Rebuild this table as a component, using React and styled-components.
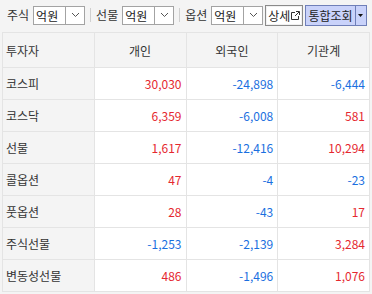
import styled, { createGlobalStyle } from 'styled-components';

const GlobalStyle = createGlobalStyle`
  html, body {
    margin: 0;
    padding: 0;
    background: #f4f4f4;
  }
  body {
    font-family: "Noto Sans CJK KR", "DejaVu Sans", sans-serif;
  }
`;

const rows = [
  { name: '코스피', values: [30030, -24898, -6444] },
  { name: '코스닥', values: [6359, -6008, 581] },
  { name: '선물', values: [1617, -12416, 10294] },
  { name: '콜옵션', values: [47, -4, -23] },
  { name: '풋옵션', values: [28, -43, 17] },
  { name: '주식선물', values: [-1253, -2139, 3284] },
  { name: '변동성선물', values: [486, -1496, 1076] },
];

const Chevron = () => (
  <svg width="9" height="6" viewBox="0 0 9 6">
    <path d="M1 1 L4.5 4.5 L8 1" fill="none" stroke="#555" strokeWidth="1" />
  </svg>
);

const UnitSelect = () => (
  <Select>
    <SelectValue>억원</SelectValue>
    <SelectArrow><Chevron /></SelectArrow>
  </Select>
);

const App = () => {
  return (
    <>
      <GlobalStyle />
      <Page>
        <Toolbar>
          <Label>주식</Label>
          <UnitSelect />
          <Divider />
          <Label>선물</Label>
          <UnitSelect />
          <Divider />
          <Label>옵션</Label>
          <UnitSelect />
          <DetailButton>
            상세
            <svg width="9" height="9" viewBox="0 0 9 9">
              <path d="M0.5 1.5 H4 M0.5 1.5 V8.5 H7.5 V5" fill="none" stroke="#333" strokeWidth="1" />
              <path d="M4 5 L8 1 M5 0.5 H8.5 V4" fill="none" stroke="#333" strokeWidth="1" />
            </svg>
          </DetailButton>
          <ComboButton>
            <ComboText>통합조회</ComboText>
            <ComboArrow>
              <svg width="5" height="3" viewBox="0 0 5 3">
                <path d="M0 0 H5 L2.5 3 Z" fill="#111" />
              </svg>
            </ComboArrow>
          </ComboButton>
        </Toolbar>

        <Table>
          <thead>
            <tr>
              <HeadCell $left>투자자</HeadCell>
              <HeadCell>개인</HeadCell>
              <HeadCell>외국인</HeadCell>
              <HeadCell>기관계</HeadCell>
            </tr>
          </thead>
          <tbody>
            {rows.map((row) => (
              <tr key={row.name}>
                <NameCell>{row.name}</NameCell>
                {row.values.map((v, i) => (
                  <ValueCell key={i} $negative={v < 0}>
                    {v.toLocaleString('en-US')}
                  </ValueCell>
                ))}
              </tr>
            ))}
          </tbody>
        </Table>
      </Page>
    </>
  );
};

export default App;

/* ============== styles ============== */

const Page = styled.div`
  width: 372px;
  height: 294px;
  background: #f4f4f4;
  overflow: hidden;
`;

const Toolbar = styled.div`
  display: flex;
  align-items: center;
  height: 29px;
  padding-left: 7px;
  padding-top: 1px;
  box-sizing: border-box;
`;

const Label = styled.span`
  font-size: 12px;
  color: #333;
  margin-right: 4px;
  line-height: 1;
`;

const Select = styled.div`
  display: flex;
  height: 19px;
  box-sizing: border-box;
  border: 1px solid #a3a3a3;
  background: #fff;
`;

const SelectValue = styled.span`
  width: 31px;
  padding-left: 2px;
  box-sizing: border-box;
  font-size: 12px;
  line-height: 17px;
  color: #222;
`;

const SelectArrow = styled.span`
  width: 18px;
  border-left: 1px solid #a3a3a3;
  display: flex;
  align-items: center;
  justify-content: center;
`;

const Divider = styled.span`
  width: 1px;
  height: 14px;
  background: #d0d0d0;
  margin: 0 5px 0 5px;
`;

const DetailButton = styled.button`
  display: flex;
  align-items: center;
  gap: 1px;
  height: 21px;
  margin-left: 2px;
  padding: 0 2px 0 2px;
  font-family: inherit;
  font-size: 12px;
  color: #222;
  background: #fff;
  border: 1px solid #8a8a8a;
  box-shadow: inset 0 0 0 1px #f0f0f0;
  cursor: pointer;
`;

const ComboButton = styled.div`
  display: flex;
  height: 21px;
  margin-left: 2px;
  box-sizing: border-box;
  border: 1px solid #6f7fb8;
  background: #c9d2fa;
`;

const ComboText = styled.span`
  font-size: 12px;
  line-height: 19px;
  color: #222;
  padding: 0 2px;
`;

const ComboArrow = styled.span`
  width: 10px;
  border-left: 1px solid #6f7fb8;
  display: flex;
  align-items: center;
  justify-content: center;
`;

const Table = styled.table`
  margin: 3px 0 0 2px;
  width: 368px;
  border-collapse: collapse;
  table-layout: fixed;
  border: 1px solid #dcdcdc;
  font-size: 12px;
`;

const HeadCell = styled.th`
  height: 35px;
  padding: 0 3px;
  box-sizing: border-box;
  background: #f4f4f4;
  border: 1px solid #e4e4e4;
  font-weight: normal;
  color: #333;
  text-align: ${({ $left }) => ($left ? 'left' : 'center')};
`;

const NameCell = styled.td`
  height: 32px;
  padding: 0 3px;
  box-sizing: border-box;
  background: #f4f4f4;
  border: 1px solid #e4e4e4;
  color: #333;
`;

const ValueCell = styled.td`
  height: 32px;
  padding: 0 4px;
  box-sizing: border-box;
  background: #fff;
  border: 1px solid #e4e4e4;
  text-align: right;
  color: ${({ $negative }) => ($negative ? '#1a6fe0' : '#e5282f')};
`;
